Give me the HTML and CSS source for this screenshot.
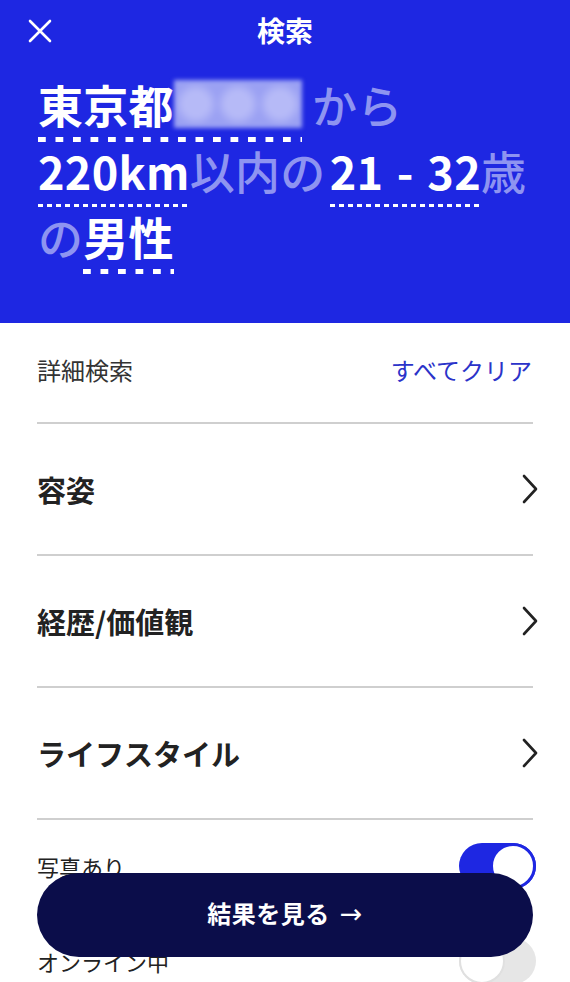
FILE: index.html
```html
<!DOCTYPE html>
<html lang="ja">
<head>
<meta charset="UTF-8" />
<meta name="viewport" content="width=device-width, initial-scale=1.0" />
<title>検索</title>
<link rel="stylesheet" href="styles.css">
</head>
<body>
<header class="hero">
  <div class="topbar">
    <button class="close" aria-label="閉じる">
      <svg width="24" height="24" viewBox="0 0 24 24"><path d="M2 2 L22 22 M22 2 L2 22" stroke="#fff" stroke-width="2.6" stroke-linecap="round" fill="none"/></svg>
    </button>
    <h1 class="title">検索</h1>
  </div>
  <div class="summary">
    <div class="line"><span class="pick dots-lg place">東京都<span class="blur"></span></span><span class="dim">から</span></div>
    <div class="line"><span class="pick dots-sm">220km</span><span class="dim">以内の</span><span class="pick dots-sm ages">21 - 32</span><span class="dim">歳</span></div>
    <div class="line"><span class="dim">の</span><span class="pick dots-lg">男性</span></div>
  </div>
</header>

<main class="filters">
  <div class="filters-head">
    <span>詳細検索</span>
    <a class="clear" href="#">すべてクリア</a>
  </div>

  <div class="row">
    <span>容姿</span>
    <svg class="chev" width="18" height="30" viewBox="0 0 18 30"><path d="M3 2 L15 15 L3 28" stroke="#222" stroke-width="2.6" stroke-linecap="round" stroke-linejoin="round" fill="none"/></svg>
  </div>
  <div class="row">
    <span>経歴/価値観</span>
    <svg class="chev" width="18" height="30" viewBox="0 0 18 30"><path d="M3 2 L15 15 L3 28" stroke="#222" stroke-width="2.6" stroke-linecap="round" stroke-linejoin="round" fill="none"/></svg>
  </div>
  <div class="row">
    <span>ライフスタイル</span>
    <svg class="chev" width="18" height="30" viewBox="0 0 18 30"><path d="M3 2 L15 15 L3 28" stroke="#222" stroke-width="2.6" stroke-linecap="round" stroke-linejoin="round" fill="none"/></svg>
  </div>

  <div class="toggle-row">
    <span>写真あり</span>
    <span class="switch on"><span class="knob"></span></span>
  </div>
  <div class="toggle-row">
    <span>オンライン中</span>
    <span class="switch"><span class="knob"></span></span>
  </div>
</main>

<button class="results">結果を見る <span class="arrow">→</span></button>
</body>
</html>
```

FILE: styles.css
```css
* {
  box-sizing: border-box;
}

html, body {
  margin: 0;
  padding: 0;
  height: 100%;
  overflow: hidden;
}

body {
  font-family: "Noto Sans CJK JP", "Noto Sans", sans-serif;
  background-color: #fff;
  color: #222;
}

.hero {
  background-color: #1e27e2;
  color: #fff;
  height: 323px;
  padding: 0 38px;
}

.topbar {
  height: 62px;
  display: flex;
  align-items: center;
  justify-content: center;
  position: relative;
}

.close {
  position: absolute;
  left: -10px;
  top: 19px;
  background: none;
  border: none;
  padding: 0;
  width: 24px;
  height: 24px;
}

.title {
  margin: 0;
  font-size: 28px;
  font-weight: 700;
  line-height: 1;
  margin-top: -2px;
}

.summary {
  margin-top: 10px;
  font-size: 45px;
  font-weight: 700;
  line-height: 66px;
  letter-spacing: 0.3px;
}

.line {
  white-space: nowrap;
}

.dim {
  color: #8e94f1;
  font-weight: 500;
}

.pick {
  color: #fff;
  padding-bottom: 4px;
  background-repeat: repeat-x;
  background-position: left bottom;
}

.place {
  margin-right: 10px;
}

.ages {
  word-spacing: 3px;
  margin-left: 4px;
}

.dots-lg {
  background-image: linear-gradient(to right, #fff 0, #fff 8px, transparent 8px);
  background-size: 17.5px 5px;
  padding-bottom: 5px;
}

.dots-sm {
  background-image: linear-gradient(to right, #fff 0, #fff 5px, transparent 5px);
  background-size: 9px 3px;
  padding-bottom: 4px;
}

.blur {
  display: inline-block;
  width: 128px;
  height: 48px;
  vertical-align: -4px;
  background:
    radial-gradient(circle at 22px 24px, #b6baf7 0, #b6baf7 12px, transparent 22px),
    radial-gradient(circle at 64px 24px, #b6baf7 0, #b6baf7 12px, transparent 22px),
    radial-gradient(circle at 106px 24px, #b6baf7 0, #b6baf7 12px, transparent 22px),
    #9ba1f3;
  filter: blur(2px);
}

.filters {
  padding: 0 37px;
}

.filters-head {
  height: 101px;
  display: flex;
  align-items: center;
  justify-content: space-between;
  font-size: 24px;
  color: #333;
  border-bottom: 2px solid #cfcfcf;
  padding-bottom: 6px;
}

.clear {
  color: #2b33c9;
  text-decoration: none;
  margin-right: 1px;
}

.row {
  height: 132px;
  display: flex;
  align-items: center;
  justify-content: space-between;
  font-size: 29px;
  font-weight: 700;
  color: #222;
  border-bottom: 2px solid #cfcfcf;
}

.chev {
  margin-right: -6px;
}

.toggle-row {
  height: 95px;
  display: flex;
  align-items: center;
  justify-content: space-between;
  font-size: 22px;
  color: #222;
  padding-bottom: 4px;
}

.switch {
  width: 77px;
  height: 46px;
  border-radius: 23px;
  background-color: #e6e6e6;
  display: flex;
  margin-right: -3px;
}

.switch .knob {
  width: 46px;
  height: 46px;
  border-radius: 50%;
  background-color: #fff;
  border: 2px solid #e0e0e0;
}

.switch.on {
  background-color: #1e27e2;
  justify-content: flex-end;
}

.switch.on .knob {
  border: 3px solid #1e27e2;
}

.results {
  position: fixed;
  left: 37px;
  right: 37px;
  bottom: 25px;
  height: 84px;
  border: none;
  border-radius: 42px;
  background-color: #0b0d4a;
  color: #fff;
  font-family: "Noto Sans CJK JP", "Noto Sans", sans-serif;
  font-size: 24px;
  font-weight: 700;
  letter-spacing: 0.5px;
  padding-bottom: 6px;
}

.arrow {
  font-family: "DejaVu Sans", sans-serif;
  font-weight: 400;
  font-size: 27px;
  margin-left: 4px;
}
```
